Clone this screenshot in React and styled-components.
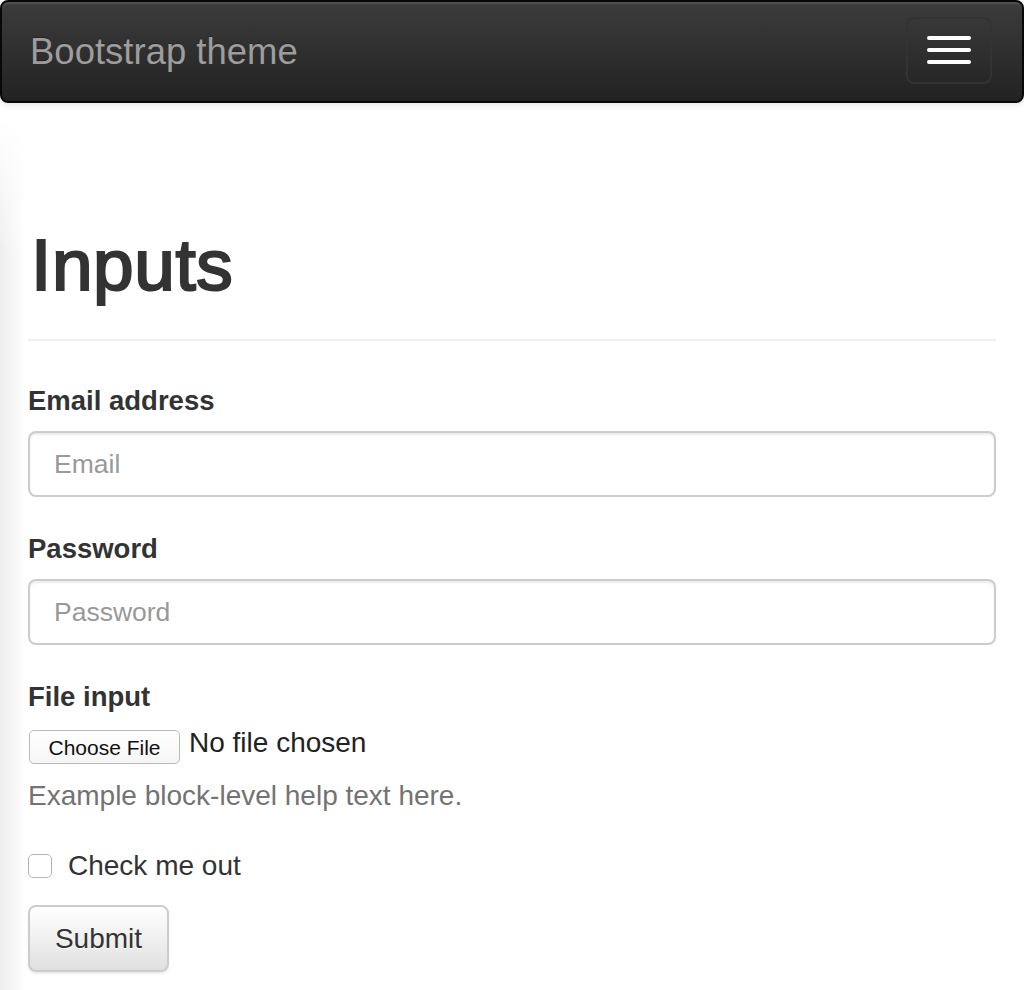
import styled, { createGlobalStyle } from "styled-components";

const GlobalStyle = createGlobalStyle`
  html, body {
    margin: 0;
    padding: 0;
    background: #fff;
  }
  body {
    font-family: "Liberation Sans", Arial, sans-serif;
    color: #333;
  }
`;

const Page = styled.div`
  min-height: 990px;
  background-image: linear-gradient(
      to bottom,
      #fff 0%,
      rgba(255, 255, 255, 0) 100%
    ),
    linear-gradient(to right, rgba(0, 0, 0, 0.07), rgba(0, 0, 0, 0) 26px);
  background-repeat: no-repeat;
  background-size: 26px 140px, 26px 100%;
  background-position: 0 120px, 0 120px;
`;

const Navbar = styled.nav`
  display: flex;
  align-items: center;
  justify-content: space-between;
  box-sizing: border-box;
  height: 103px;
  padding: 0 30px 0 28px;
  border: 2px solid #080808;
  border-radius: 8px;
  background-image: linear-gradient(to bottom, #3c3c3c 0%, #222 100%);
  box-shadow: inset 0 2px 0 rgba(255, 255, 255, 0.1),
    0 2px 6px rgba(0, 0, 0, 0.1);
`;

const Brand = styled.a`
  font-size: 36.5px;
  color: #9d9d9d;
  text-decoration: none;
  text-shadow: 0 -1px 0 rgba(0, 0, 0, 0.25);
  margin-top: 1px;
`;

const Toggle = styled.button`
  display: flex;
  flex-direction: column;
  align-items: center;
  justify-content: center;
  gap: 8px;
  width: 86px;
  height: 67px;
  margin-top: -3px;
  padding: 0;
  background: transparent;
  border: 2px solid #333;
  border-radius: 8px;
`;

const Bar = styled.span`
  display: block;
  width: 44px;
  height: 4px;
  border-radius: 2px;
  background: #fff;
`;

const Container = styled.main`
  padding: 122px 28px 0;
`;

const Heading = styled.h1`
  margin: 0 0 42px;
  padding: 0 0 35px 3px;
  border-bottom: 2px solid #eee;
  font-size: 73px;
  font-weight: 400;
  line-height: 79px;
  letter-spacing: 0.6px;
  color: #333;
  -webkit-text-stroke: 2.2px #333;
`;

const Form = styled.form`
  display: flex;
  flex-direction: column;
`;

const Group = styled.div`
  display: flex;
  flex-direction: column;
  margin-bottom: ${(p) => p.gap || "34px"};
`;

const Label = styled.label`
  display: block;
  font-size: 27.5px;
  font-weight: 700;
  line-height: 36px;
  margin-bottom: 12px;
  color: #333;
`;

const Input = styled.input`
  box-sizing: border-box;
  width: 100%;
  height: 66px;
  padding: 0 24px;
  font-family: "Liberation Sans", Arial, sans-serif;
  font-size: 26.5px;
  color: #555;
  background: #fff;
  border: 2px solid #ccc;
  border-radius: 8px;
  box-shadow: inset 0 2px 2px rgba(0, 0, 0, 0.075);
  outline: none;
  &::placeholder {
    color: #999;
  }
`;

const FileRow = styled.div`
  display: flex;
  align-items: center;
  gap: 9px;
  margin-top: 3px;
  padding-left: 1px;
`;

const FileButton = styled.span`
  display: inline-flex;
  align-items: center;
  justify-content: center;
  box-sizing: border-box;
  width: 151px;
  height: 34px;
  padding-top: 2px;
  font-family: "Liberation Sans", Arial, sans-serif;
  font-size: 21px;
  color: #111;
  background: linear-gradient(to bottom, #fff, #f6f6f6);
  border: 1px solid #b9b9b9;
  border-radius: 5px;
`;

const FileText = styled.span`
  font-size: 28px;
  color: #222;
  margin-top: -9px;
`;

const Help = styled.p`
  margin: 14px 0 0;
  font-size: 28px;
  line-height: 36px;
  color: #737373;
`;

const CheckRow = styled.label`
  display: flex;
  align-items: center;
  gap: 16px;
  font-size: 28px;
  line-height: 36px;
  color: #333;
  margin-bottom: 21px;
`;

const CheckBox = styled.span`
  display: inline-block;
  box-sizing: border-box;
  width: 24px;
  height: 24px;
  border: 1.5px solid #b4b4b4;
  border-radius: 5px;
  background: #fff;
`;

const Submit = styled.button`
  box-sizing: border-box;
  width: 141px;
  height: 67px;
  font-family: "Liberation Sans", Arial, sans-serif;
  font-size: 28px;
  color: #333;
  text-shadow: 0 1px 0 #fff;
  background-image: linear-gradient(to bottom, #fff 0%, #e0e0e0 100%);
  border: 2px solid #ccc;
  border-radius: 8px;
  box-shadow: inset 0 2px 0 rgba(255, 255, 255, 0.15),
    0 2px 2px rgba(0, 0, 0, 0.075);
  padding: 0;
`;

export default function App() {
  return (
    <Page>
      <GlobalStyle />
      <Navbar>
        <Brand href="#">Bootstrap theme</Brand>
        <Toggle type="button" aria-label="Toggle navigation">
          <Bar />
          <Bar />
          <Bar />
        </Toggle>
      </Navbar>
      <Container>
        <Heading>Inputs</Heading>
        <Form onSubmit={(e) => e.preventDefault()}>
          <Group>
            <Label htmlFor="email">Email address</Label>
            <Input id="email" type="email" placeholder="Email" />
          </Group>
          <Group>
            <Label htmlFor="password">Password</Label>
            <Input id="password" type="password" placeholder="Password" />
          </Group>
          <Group gap="34px">
            <Label>File input</Label>
            <FileRow>
              <FileButton>Choose File</FileButton>
              <FileText>No file chosen</FileText>
            </FileRow>
            <Help>Example block-level help text here.</Help>
          </Group>
          <CheckRow>
            <CheckBox />
            Check me out
          </CheckRow>
          <div>
            <Submit type="submit">Submit</Submit>
          </div>
        </Form>
      </Container>
    </Page>
  );
}
